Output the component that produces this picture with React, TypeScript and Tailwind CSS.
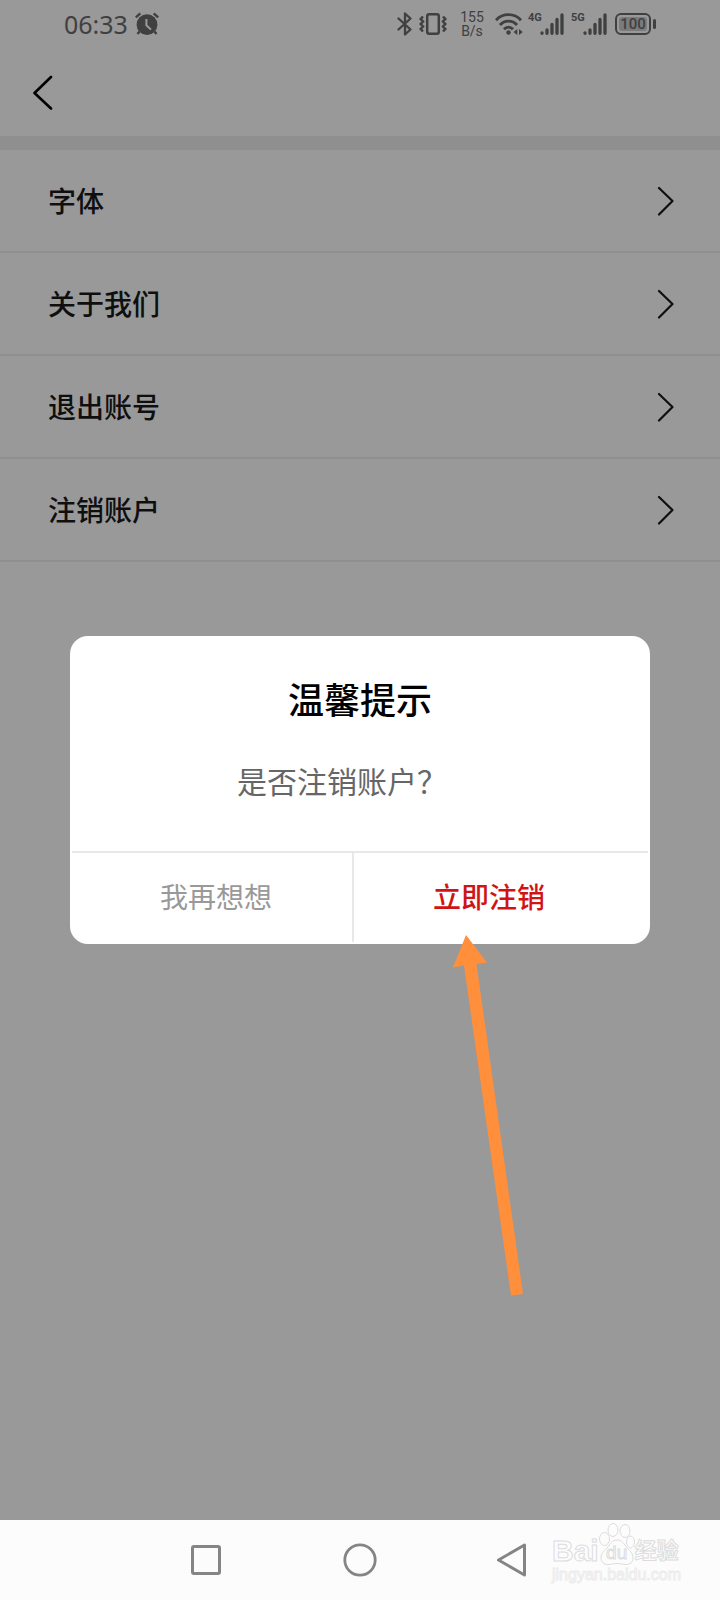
import React from "react";

const SANS = "font-['Noto_Sans_CJK_SC',sans-serif]";
const KAI = "font-['Kaiti_SC','KaiTi','Noto_Sans_CJK_SC',serif]";

const settings = ["字体", "关于我们", "退出账号", "注销账户"];

function AlarmIcon() {
  return (
    <svg className="h-6 w-6" viewBox="0 0 24 24" fill="currentColor" aria-hidden="true">
      <path d="M0.8 5.3 5.3 1.3M23.2 5.3 18.7 1.3" stroke="currentColor" strokeWidth="2.4" />
      <path d="M4.5 19.5 2.5 22M19.5 19.5 21.5 22" stroke="currentColor" strokeWidth="2.4" />
      <circle cx="12" cy="12.7" r="10.4" />
      <path d="M11.4 7v6.2l4.6 4.4" fill="none" stroke="white" strokeWidth="2" />
    </svg>
  );
}

function BluetoothIcon() {
  return (
    <svg className="h-6 w-4" viewBox="0 0 16 24" fill="none" stroke="currentColor" strokeWidth="2.3" strokeLinejoin="round" strokeLinecap="round" aria-hidden="true">
      <path d="M1.5 6.5 13.5 17.5 8 22.5V1.5l5.5 5L1.5 17.5" />
    </svg>
  );
}

function VibrateIcon() {
  return (
    <svg className="h-6 w-7" viewBox="0 0 28 24" fill="none" stroke="currentColor" aria-hidden="true">
      <rect x="8.2" y="2.2" width="11.6" height="19.6" rx="2" strokeWidth="2.5" />
      <path d="m4 4.500-2.300 2.500 2.300 2.500-2.300 2.500 2.300 2.500-2.300 2.500 2.300 2.500M24 4.500l2.300 2.500-2.300 2.500 2.300 2.500-2.300 2.500 2.300 2.500-2.300 2.500" strokeWidth="2.500" />
    </svg>
  );
}

function WifiIcon() {
  return (
    <svg className="h-6 w-7" viewBox="0 0 28 24" fill="none" stroke="currentColor" strokeWidth="2.900" aria-hidden="true">
      <path d="M1 8.200C7.500.8 19.500.8 26 8.200M5 13c4.500-5.200 12.500-5.200 17 0M9 17.300c2.600-2.900 6.400-2.900 9 0" />
      <circle cx="13.500" cy="20.500" r="2.200" fill="currentColor" stroke="none" />
      <path d="m22.300 17v6l-3.800-3zM24 17v6l3.800-3z" fill="currentColor" stroke="none" />
    </svg>
  );
}

function Signal({ label }: { label: string }) {
  return (
    <span className="flex items-start">
      <span className="w-3 text-[11px] leading-3 font-bold">{label}</span>
      <svg className="h-6 w-6" viewBox="0 0 24 24" stroke="currentColor" strokeWidth="3.300" strokeLinecap="round" aria-hidden="true">
        <path d="M2 20.800v.5M7 18v3.300M12 12.500v8.800M17 7.500v13.800M22 3v18.300" />
      </svg>
    </span>
  );
}

function Battery() {
  return (
    <span className="flex items-center gap-[2px]">
      <span className="flex h-[22px] w-9 items-center rounded-md border-2 border-current p-[2px]">
        <span className="flex h-full w-full items-center justify-center rounded-[3px] bg-[#cecece] text-[15px] leading-4 font-medium">
          100
        </span>
      </span>
      <span className="h-[10px] w-[3px] rounded-full bg-current" />
    </span>
  );
}

function StatusBar() {
  return (
    <div className="flex h-12 items-center justify-between pr-16 pl-16 font-['Roboto',sans-serif] text-[#6b6b6b]">
      <div className="flex items-center gap-[7px]">
        <time className="font-['Noto_Sans',sans-serif] text-[25px] leading-8">06:33</time>
        <AlarmIcon />
      </div>
      <div className="flex items-center">
        <BluetoothIcon />
        <span className="ml-[6px]"><VibrateIcon /></span>
        <span className="ml-3 flex w-[26px] flex-col items-center text-[14px] leading-[14px]">
          <span>155</span>
          <span>B/s</span>
        </span>
        <span className="ml-[10px]"><WifiIcon /></span>
        <span className="ml-[5px]"><Signal label="4G" /></span>
        <span className="ml-[7px]"><Signal label="5G" /></span>
        <span className="ml-2"><Battery /></span>
      </div>
    </div>
  );
}

function SettingsRow({ label }: { label: string }) {
  return (
    <li className="border-b-2 border-[#eeeeee]">
      <button type="button" className="flex h-[101px] w-full items-center justify-between pr-[46px] pl-12 text-left text-[28px] leading-10 font-medium text-[#1a1a1a]">
        <span className="pb-[2px]">{label}</span>
        <svg className="h-8 w-[18px]" viewBox="0 0 18 32" fill="none" stroke="currentColor" strokeWidth="2.200" strokeLinecap="round" strokeLinejoin="round" aria-hidden="true">
          <path d="M3 3 16.500 16 3 29.500" />
        </svg>
      </button>
    </li>
  );
}

function PointerArrow() {
  return (
    <svg className="pointer-events-none absolute top-[298px] left-[382px] h-[364px] w-[74px]" viewBox="0 0 74 364" fill="#ff8f3b" aria-hidden="true">
      <path d="M14 1 35 28.500 24.500 30 71 360 59 361.500 12 31.500 1 33.500Z" />
    </svg>
  );
}

function ConfirmDialog() {
  return (
    <div className="absolute inset-0 flex items-center bg-black/40 px-[70px] pt-[60px]">
      <div role="dialog" aria-modal="true" aria-labelledby="dialog-title" className={`relative w-full rounded-[18px] bg-white p-[2px] text-center ${KAI}`}>
        <h2 id="dialog-title" className="pt-[34px] text-[36px] leading-[52px] font-medium text-black">
          温馨提示
        </h2>
        <p className="pt-[34px] pr-9 pb-[49px] text-[30px] leading-[44px] text-[#666666]">是否注销账户？</p>
        <div className="flex border-t-2 border-[#e8e8e8] text-[28px]">
          <button type="button" className="h-[89px] w-[282px] border-r-2 border-[#e8e8e8] pb-1 pl-2 text-[#999999]">
            我再想想
          </button>
          <button type="button" className="h-[89px] flex-1 pr-6 pb-1 font-medium text-[#d01414]">
            立即注销
          </button>
        </div>
        <PointerArrow />
      </div>
    </div>
  );
}

function Watermark() {
  return (
    <div className="pointer-events-none absolute right-10 bottom-[15px] w-32 font-['Liberation_Sans','Noto_Sans_CJK_SC',sans-serif] text-[#fcfcfc]">
      <div className="flex items-end [-webkit-text-stroke:1px_#dcdcdc]">
        <span className="text-[30px] leading-7 font-bold">Bai</span>
        <span className="relative flex h-[42px] w-9 items-end justify-center">
          <svg className="absolute inset-0 h-full w-full" viewBox="0 0 36 42" fill="#fcfcfc" stroke="#dcdcdc" aria-hidden="true">
            <ellipse cx="5.500" cy="16" rx="5" ry="6.500" />
            <ellipse cx="14" cy="7" rx="5" ry="6.500" />
            <ellipse cx="26" cy="8" rx="5" ry="6.500" />
            <ellipse cx="31.500" cy="19" rx="4" ry="6" />
            <path d="M18 17c5 0 7 4 10 8 3 3 6 5 6 10 0 4-3 6.500-7 6.500-3 0-5-1-9-1s-6 1-9 1c-4 0-7-2.500-7-6.500 0-5 3-7 6-10 3-4 5-8 10-8z" />
          </svg>
          <span className="relative text-[19px] leading-6">du</span>
        </span>
        <span className="text-[22px] leading-7 font-bold">经验</span>
      </div>
      <div className="text-[16px] leading-5 [-webkit-text-stroke:1px_#ececec]">jingyan.baidu.com</div>
    </div>
  );
}

function NavBar() {
  const button = "flex w-[154px] items-center justify-center";
  return (
    <nav className="relative flex h-20 justify-center bg-[#fcfcfc] text-[#858585]">
      <button type="button" aria-label="最近任务" className={button}>
        <svg className="h-9 w-9" viewBox="0 0 36 36" fill="none" stroke="currentColor" strokeWidth="3">
          <rect x="4.500" y="4.500" width="27" height="27" rx="1.500" />
        </svg>
      </button>
      <button type="button" aria-label="主屏幕" className={button}>
        <svg className="h-9 w-9" viewBox="0 0 36 36" fill="none" stroke="currentColor" strokeWidth="2.800">
          <circle cx="18" cy="18" r="15.200" />
        </svg>
      </button>
      <button type="button" aria-label="返回上一级" className={button}>
        <svg className="h-9 w-9" viewBox="0 0 36 36" fill="none" stroke="currentColor" strokeWidth="3" strokeLinejoin="round">
          <path d="M28.500 3v30L2.500 18z" />
        </svg>
      </button>
      <Watermark />
    </nav>
  );
}

export default function App() {
  return (
    <div className={`flex min-h-screen flex-col bg-white ${SANS}`}>
      <main className="relative flex-1">
        <StatusBar />
        <header className="flex h-[88px] items-center px-8">
          <button type="button" aria-label="返回" className="text-black">
            <svg className="h-9 w-[22px]" viewBox="0 0 22 36" fill="none" stroke="currentColor" strokeWidth="2.600" strokeLinecap="round" strokeLinejoin="round">
              <path d="M19 3 2.500 19 19 34.500" />
            </svg>
          </button>
        </header>
        <ul className="border-t-[14px] border-[#eeeeee]">
          {settings.map((label) => (
            <SettingsRow key={label} label={label} />
          ))}
        </ul>
        <ConfirmDialog />
      </main>
      <NavBar />
    </div>
  );
}
